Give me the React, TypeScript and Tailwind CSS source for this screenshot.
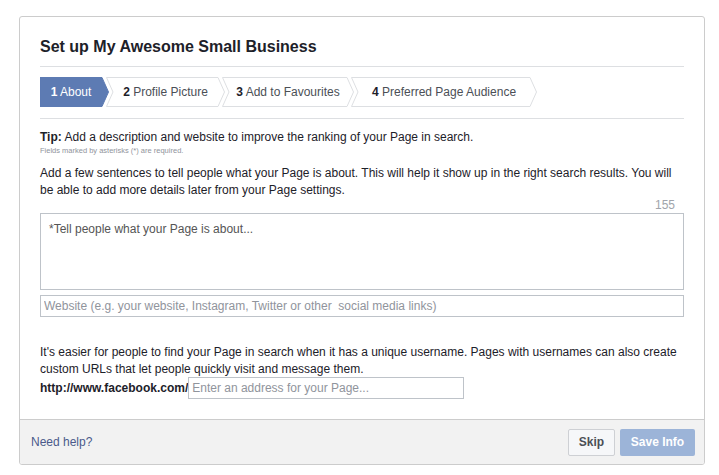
import React from 'react';

type StepProps = {
  num: string;
  label: string;
  width: number;
  first?: boolean;
  active?: boolean;
};

const Step: React.FC<StepProps> = ({ num, label, width, first, active }) => {
  const w = width;
  const pts = first
    ? `0,0.5 ${w - 7},0.5 ${w - 0.5},15 ${w - 7},29.5 0,29.5`
    : `0.5,0.5 ${w - 7},0.5 ${w - 0.5},15 ${w - 7},29.5 0.5,29.5 7,15`;
  return (
    <div
      className={`relative h-[30px] flex items-center justify-center shrink-0 ${first ? 'pr-[7px]' : '-ml-[3px] pl-[7px] pr-[7px]'}`}
      style={{ width: w }}
    >
      <svg className="absolute inset-0" width={w} height={30} viewBox={`0 0 ${w} 30`}>
        <polygon
          points={pts}
          fill={active ? '#5d7bb3' : '#ffffff'}
          stroke={active ? '#5d7bb3' : '#dddfe2'}
          strokeWidth={1}
        />
      </svg>
      <span className={`relative text-[12px] whitespace-nowrap ${active ? 'text-white' : 'text-[#4b4f56]'}`}>
        <b className={active ? 'text-white' : 'text-[#1d2129]'}>{num}</b> {label}
      </span>
    </div>
  );
};

export default function App() {
  return (
    <div className="min-h-screen bg-white pt-4 pl-[19px] font-['Liberation_Sans',Arial,sans-serif] text-[#1d2129]">
      <div className="w-[686px] border border-[#cccccc] rounded-[3px] bg-white overflow-hidden">
        <div className="px-5">
          <div className="pt-5 pb-[9px] border-b border-[#dddfe2]">
            <h1 className="text-[16px] leading-5 font-bold">Set up My Awesome Small Business</h1>
          </div>

          <div className="pt-[10px] pb-[11px] border-b border-[#dddfe2] flex">
            <Step num="1" label="About" width={69} first active />
            <Step num="2" label="Profile Picture" width={119} />
            <Step num="3" label="Add to Favourites" width={132} />
            <Step num="4" label="Preferred Page Audience" width={186} />
          </div>

          <div className="pt-[10px]">
            <p className="text-[12px] leading-4">
              <b>Tip:</b> Add a description and website to improve the ranking of your Page in search.
            </p>
            <p className="text-[7.5px] leading-3 text-[#90949c]">Fields marked by asterisks (*) are required.</p>

            <p className="mt-[8px] text-[12px] leading-[17px]">
              Add a few sentences to tell people what your Page is about. This will help it show up in the right search
              results. You will be able to add more details later from your Page settings.
            </p>

            <div className="-mt-[2px] pr-[9px] text-right text-[12px] leading-4 text-[#a0a4ab]">155</div>

            <textarea
              className="block w-full h-[77px] border border-[#bec3c9] px-2 py-[7px] text-[12px] leading-4 resize-none outline-none placeholder:text-[#555555]"
              placeholder="*Tell people what your Page is about..."
            />

            <input
              className="mt-[5px] block w-full h-[22px] border border-[#bec3c9] px-[3px] text-[12px] outline-none placeholder:text-[#90949c]"
              placeholder="Website (e.g. your website, Instagram, Twitter or other  social media links)"
            />

            <p className="mt-[27px] text-[12px] leading-[17px]">
              It's easier for people to find your Page in search when it has a unique username. Pages with usernames can
              also create custom URLs that let people quickly visit and message them.
            </p>

            <div className="-mt-[1px] flex items-center pb-[20px]">
              <span className="text-[12px] font-bold whitespace-nowrap">http://www.facebook.com/</span>
              <input
                className="w-[276px] h-[22px] border border-[#bec3c9] px-[3px] text-[12px] outline-none placeholder:text-[#90949c]"
                placeholder="Enter an address for your Page..."
              />
            </div>
          </div>
        </div>

        <div className="h-[45px] bg-[#f2f2f2] border-t border-[#cccccc] flex items-center justify-between pl-[11px] pr-[9px]">
          <a className="text-[12px] text-[#4b5a8b]">Need help?</a>
          <div className="flex gap-[5px]">
            <button className="h-[27px] w-[47px] rounded-[2px] border border-[#ced0d4] bg-[#f6f7f9] text-[12px] font-bold text-[#4b4f56]">
              Skip
            </button>
            <button className="h-[27px] w-[75px] rounded-[2px] bg-[#9cb4d8] text-[12px] font-bold text-white">
              Save Info
            </button>
          </div>
        </div>
      </div>
    </div>
  );
}
